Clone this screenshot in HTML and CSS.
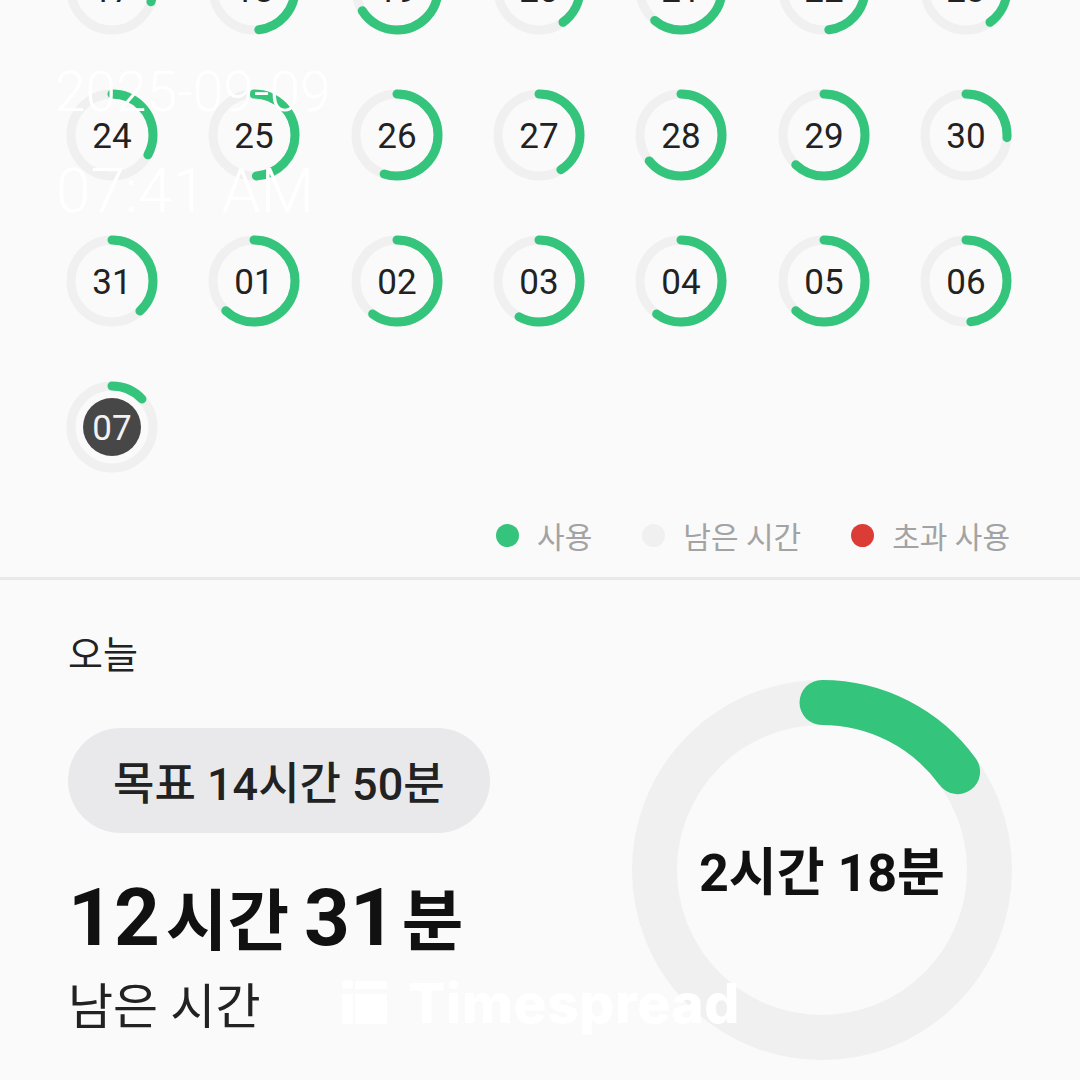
FILE: index.html
```html
<!DOCTYPE html>
<html lang="ko">
<head>
    <meta charset="UTF-8">
    <meta name="viewport" content="width=device-width, initial-scale=1.0">
    <title>Timespread</title>
    <link rel="stylesheet" href="styles.css">
</head>
<body>
    <div class="calendar" id="calendar"></div>

    <div class="legend">
        <div class="legend-item"><span class="dot dot-used"></span>사용</div>
        <div class="legend-item"><span class="dot dot-left"></span>남은 시간</div>
        <div class="legend-item"><span class="dot dot-over"></span>초과 사용</div>
    </div>

    <div class="divider"></div>

    <section class="today">
        <div class="today-info">
            <div class="today-label">오늘</div>
            <div class="goal-pill">목표 14시간 50분</div>
            <div class="remaining"><span class="num">12</span><span class="unit">시간</span> <span class="num">31</span><span class="unit">분</span></div>
            <div class="remaining-label">남은 시간</div>
        </div>
        <div class="today-ring">
            <svg viewBox="0 0 380 380" width="380" height="380">
                <circle class="ring-track" cx="190" cy="190" r="167.5"></circle>
                <circle class="ring-used" id="ringUsed" cx="190" cy="190" r="167.5" transform="rotate(-90 190 190)"></circle>
                <text class="ring-text" x="190" y="193">2시간 18분</text>
            </svg>
        </div>
    </section>

    <div class="stamp-date">2025-09-09</div>
    <div class="stamp-time">07:41 AM</div>
    <div class="watermark">
        <svg viewBox="0 0 46 46" width="46" height="46">
            <rect x="0" y="2" width="11" height="9" rx="4"></rect>
            <rect x="0" y="16" width="11" height="30" rx="1"></rect>
            <rect x="13" y="3" width="32" height="8" rx="1"></rect>
            <rect x="13" y="16" width="32" height="30" rx="1"></rect>
        </svg>
        <span>Timespread</span>
    </div>

    <script>
        // usage / goal for each day
        const days = [
            ['17', 0.30], ['18', 0.48], ['19', 0.66], ['20', 0.40], ['21', 0.61], ['22', 0.48], ['23', 0.40],
            ['24', 0.33], ['25', 0.49], ['26', 0.55], ['27', 0.41], ['28', 0.64], ['29', 0.62], ['30', 0.26],
            ['31', 0.38], ['01', 0.62], ['02', 0.60], ['03', 0.58], ['04', 0.60], ['05', 0.62], ['06', 0.48],
            ['07', 0.13]
        ];
        const today = '07';
        const r = 41;
        const c = 2 * Math.PI * r;

        let html = '';
        days.forEach(([label, ratio]) => {
            const isToday = label === today;
            html += `<div class="day">
                <svg viewBox="0 0 92 92">
                    <circle class="track" cx="46" cy="46" r="${r}"></circle>
                    <circle class="used" cx="46" cy="46" r="${r}" transform="rotate(-90 46 46)"
                        stroke-dasharray="${(ratio * c).toFixed(1)} ${c.toFixed(1)}"></circle>
                    ${isToday ? '<circle class="today-fill" cx="46" cy="46" r="29"></circle>' : ''}
                    <text class="${isToday ? 'day-num today-num' : 'day-num'}" x="46" y="47">${label}</text>
                </svg>
            </div>`;
        });
        document.getElementById('calendar').innerHTML = html;

        const big = 2 * Math.PI * 167.5;
        document.getElementById('ringUsed').setAttribute('stroke-dasharray', `${(0.15 * big).toFixed(1)} ${big.toFixed(1)}`);
    </script>
</body>
</html>
```

FILE: styles.css
```css
body {
    margin: 0;
    width: 1080px;
    height: 1080px;
    overflow: hidden;
    position: relative;
    background: #fafafa;
    font-family: "Roboto", "Noto Sans CJK KR", sans-serif;
    color: #1f1f1f;
}
.calendar {
    display: grid;
    grid-template-columns: repeat(7, 1fr);
    grid-auto-rows: 146px;
    padding: 0 43px 0 41px;
    margin-top: -84px;
}
.day {
    display: flex;
    align-items: center;
    justify-content: center;
}
.day svg {
    width: 92px;
    height: 92px;
}
.track {
    fill: none;
    stroke: #f0f0f0;
    stroke-width: 9;
}
.used {
    fill: none;
    stroke: #34c47c;
    stroke-width: 9;
    stroke-linecap: round;
}
.today-fill {
    fill: #474747;
}
.day-num {
    font-size: 35px;
    fill: #222;
    text-anchor: middle;
    dominant-baseline: central;
}
.today-num {
    fill: #f2f2f2;
}
.legend {
    display: flex;
    justify-content: flex-end;
    align-items: center;
    gap: 50px;
    height: 40px;
    margin-top: 15px;
    padding-right: 70px;
}
.legend-item {
    display: flex;
    align-items: center;
    gap: 18px;
    font-size: 30px;
    color: #a3a3a3;
}
.dot {
    width: 23px;
    height: 23px;
    border-radius: 50%;
}
.dot-used {
    background: #34c47c;
}
.dot-left {
    background: #f0f0f0;
}
.dot-over {
    background: #db3d36;
}
.divider {
    height: 3px;
    margin-top: 22px;
    background: #e9e9e9;
}
.today {
    display: flex;
    justify-content: space-between;
    align-items: flex-start;
    padding: 53px 68px 0 68px;
}
.today-info {
    display: flex;
    flex-direction: column;
    align-items: flex-start;
}
.today-label {
    font-size: 38px;
    line-height: 44px;
    color: #222;
}
.goal-pill {
    display: flex;
    align-items: center;
    height: 105px;
    margin-top: 51px;
    padding: 0 45px;
    border-radius: 53px;
    background: #e9e9eb;
    font-size: 45px;
    font-weight: 500;
    color: #222;
}
.remaining {
    margin-top: 40px;
    font-size: 60px;
    line-height: 90px;
    font-weight: 700;
    color: #111;
}
.remaining .num {
    font-size: 80px;
}
.remaining .unit {
    font-size: 67px;
    margin-left: 6px;
}
.remaining-label {
    margin-top: 8px;
    font-size: 49px;
    line-height: 60px;
    color: #222;
}
.today-ring {
    margin-top: 47px;
    width: 380px;
    height: 380px;
}
.ring-track {
    fill: none;
    stroke: #f0f0f0;
    stroke-width: 45;
}
.ring-used {
    fill: none;
    stroke: #34c47c;
    stroke-width: 45;
    stroke-linecap: round;
}
.ring-text {
    font-size: 52px;
    font-weight: 700;
    fill: #111;
    text-anchor: middle;
    dominant-baseline: central;
}
.stamp-date {
    position: absolute;
    left: 55px;
    top: 65px;
    font-size: 55px;
    font-weight: 300;
    line-height: 1;
    color: #fff;
}
.stamp-time {
    position: absolute;
    left: 56px;
    top: 160px;
    font-size: 62px;
    font-weight: 300;
    line-height: 1;
    color: #fff;
}
.watermark {
    position: absolute;
    left: 342px;
    top: 976px;
    display: flex;
    align-items: flex-end;
    gap: 20px;
    color: #fff;
}
.watermark svg {
    fill: #fff;
}
.watermark span {
    font-family: "Inter", sans-serif;
    font-size: 55px;
    font-weight: 800;
    line-height: 1;
    margin-bottom: -7px;
    letter-spacing: 0.6px;
}
```
